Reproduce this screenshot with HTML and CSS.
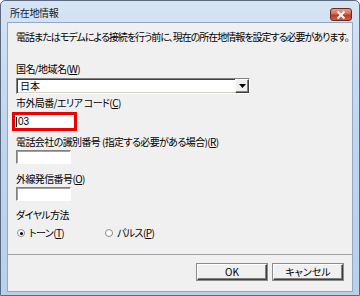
FILE: index.html
```html
<!DOCTYPE html>
<html lang="ja">
<head>
<meta charset="utf-8">
<title>所在地情報</title>
<link rel="stylesheet" href="styles.css">
</head>
<body>
<div class="window">
  <div class="titlebar">
    <span class="title">所在地情報</span>
    <span class="close">
      <svg width="22" height="12" viewBox="0 0 22 12"><path d="M8 3 L14 9 M14 3 L8 9" stroke="#fff" stroke-width="2.2" stroke-linecap="square"/></svg>
    </span>
  </div>
  <div class="client">
    <div class="content">
      <div class="text intro">電話またはモデムによる接続を行う前に、現在の所在地情報を設定する必要があります。</div>
      <div class="text label l1">国名/地域名(<u>W</u>)</div>
      <div class="combo">
        <span class="combo-value text">日本</span>
        <span class="combo-btn"><svg width="7" height="4" viewBox="0 0 7 4"><path d="M0 0 H7 L3.5 4 Z" fill="#000"/></svg></span>
      </div>
      <div class="text label l2">市外局番/エリア&nbsp;コード(<u>C</u>)</div>
      <div class="redbox"><span class="caret"></span><span class="val">03</span></div>
      <div class="text label l3">電話会社の識別番号 (指定する必要がある場合)(<u>R</u>)</div>
      <div class="field f1"></div>
      <div class="text label l4">外線発信番号(<u>O</u>)</div>
      <div class="field f2"></div>
      <div class="text label l5">ダイヤル方法</div>
      <div class="radios">
        <span class="radio-item r1"><span class="radio checked"></span><span class="text">トーン(<u>T</u>)</span></span>
        <span class="radio-item r2"><span class="radio"></span><span class="text">パルス(<u>P</u>)</span></span>
      </div>
    </div>
    <div class="footer">
      <span class="btn">OK</span>
      <span class="btn">キャンセル</span>
    </div>
  </div>
</div>
</body>
</html>
```
FILE: styles.css
```css
* { box-sizing: border-box; }
html, body { margin: 0; padding: 0; }
body {
  width: 360px; height: 296px; overflow: hidden;
  font-family: "Noto Sans CJK JP", "Liberation Sans", sans-serif;
  font-size: 10px;
  color: #000;
  background: #fff;
}
.window {
  width: 360px; height: 296px;
  border: 1px solid #5a6a80;
  border-radius: 5px 5px 0 0;
  background: linear-gradient(180deg, #d6e4f4 0%, #c2d6ee 40%, #b9d0ea 100%);
  display: flex; flex-direction: column;
}
.titlebar {
  height: 21px;
  display: flex; align-items: flex-start;
  padding-left: 9px; padding-right: 7px;
}
.title {
  margin-top: 6px;
  font-size: 10px; line-height: 12px;
  color: #1a1a1a;
  letter-spacing: -0.3px;
}
.close {
  margin-left: auto; margin-top: 7px;
  width: 22px; height: 13px;
  border: 1px solid #6b2a1e;
  border-radius: 3px;
  background: linear-gradient(180deg, #e6a293 0%, #d46a55 45%, #bb3a24 55%, #cf5f45 100%);
  display: flex; align-items: center; justify-content: center;
}
.close svg { display: block; }
.client {
  margin: 0 6px;
  height: 270px;
  background: #f0f0f0;
  border: 1px solid #8fa8c6;
  display: flex; flex-direction: column;
}
.content {
  padding: 8px 0 0 8px;
  display: flex; flex-direction: column; align-items: flex-start;
}
.text {
  line-height: 12px;
  white-space: nowrap;
  font-feature-settings: "palt";
  letter-spacing: -0.6px;
}
.text u { text-decoration: underline; text-underline-offset: 1px; }
.intro { letter-spacing: -1.0px; }
.l1 { margin-top: 20px; }
.combo {
  margin-top: 3px;
  width: 234px; height: 16px;
  background: #fff;
  border-top: 1px solid #808080; border-left: 1px solid #808080;
  border-right: 1px solid #fff; border-bottom: 1px solid #fff;
  box-shadow: inset 1px 1px 0 #404040, inset -1px -1px 0 #d4d0c8;
  display: flex; align-items: center;
  padding-left: 3px;
}
.combo-value { line-height: 12px; letter-spacing: 0; }
.combo-btn {
  margin-left: auto;
  width: 14px; height: 14px;
  background: #f0f0f0;
  border-top: 1px solid #fff; border-left: 1px solid #fff;
  border-right: 1px solid #404040; border-bottom: 1px solid #404040;
  box-shadow: inset -1px -1px 0 #808080;
  display: flex; align-items: center; justify-content: center;
}
.combo-btn svg { display: block; }
.l2 { margin-top: 3px; }
.redbox {
  margin-top: 3px; margin-left: -4px;
  width: 65px; height: 19px;
  border: 3px solid #ee0000;
  background: #fff;
  display: flex; align-items: center;
  padding-left: 1px;
}
.caret { width: 1px; height: 10px; background: #000; margin-right: 1px; }
.val { font-family: "Liberation Sans", sans-serif; font-size: 10px; line-height: 12px; }
.l3 { margin-top: 5px; }
.field {
  width: 55px; height: 14px;
  background: #fff;
  border-top: 1px solid #808080; border-left: 1px solid #808080;
  border-right: 1px solid #fff; border-bottom: 1px solid #fff;
  box-shadow: inset 1px 1px 0 #a0a0a0;
}
.f1 { margin-top: 2px; }
.l4 { margin-top: 9px; }
.f2 { margin-top: 2px; }
.l5 { margin-top: 8px; }
.radios {
  margin-top: 6px;
  display: flex; align-items: center;
  height: 12px;
  padding-left: 1px;
}
.radio-item { display: flex; align-items: center; }
.r1 { width: 88px; }
.radio {
  width: 8px; height: 8px;
  border-radius: 50%;
  border: 1px solid #8a8a8a;
  background: #fff;
  margin-right: 4px;
  position: relative;
}
.radio.checked::after {
  content: ""; position: absolute;
  left: 1.5px; top: 1.5px; width: 3px; height: 3px;
  border-radius: 50%; background: #000;
}
.footer {
  margin-top: auto;
  height: 37px;
  border-top: 1px solid #a0a0a0;
  display: flex; justify-content: flex-end; align-items: flex-start;
  padding: 9px 9px 0 0;
  gap: 6px;
}
.btn {
  width: 70px; height: 16px;
  background: #f0f0f0;
  border-top: 1px solid #fff; border-left: 1px solid #fff;
  border-right: 1px solid #404040; border-bottom: 1px solid #404040;
  box-shadow: inset -1px -1px 0 #808080, 0 0 0 1px #8c8c8c;
  display: flex; align-items: center; justify-content: center;
  font-size: 10px; line-height: 12px;
  font-feature-settings: "palt";
}
```
